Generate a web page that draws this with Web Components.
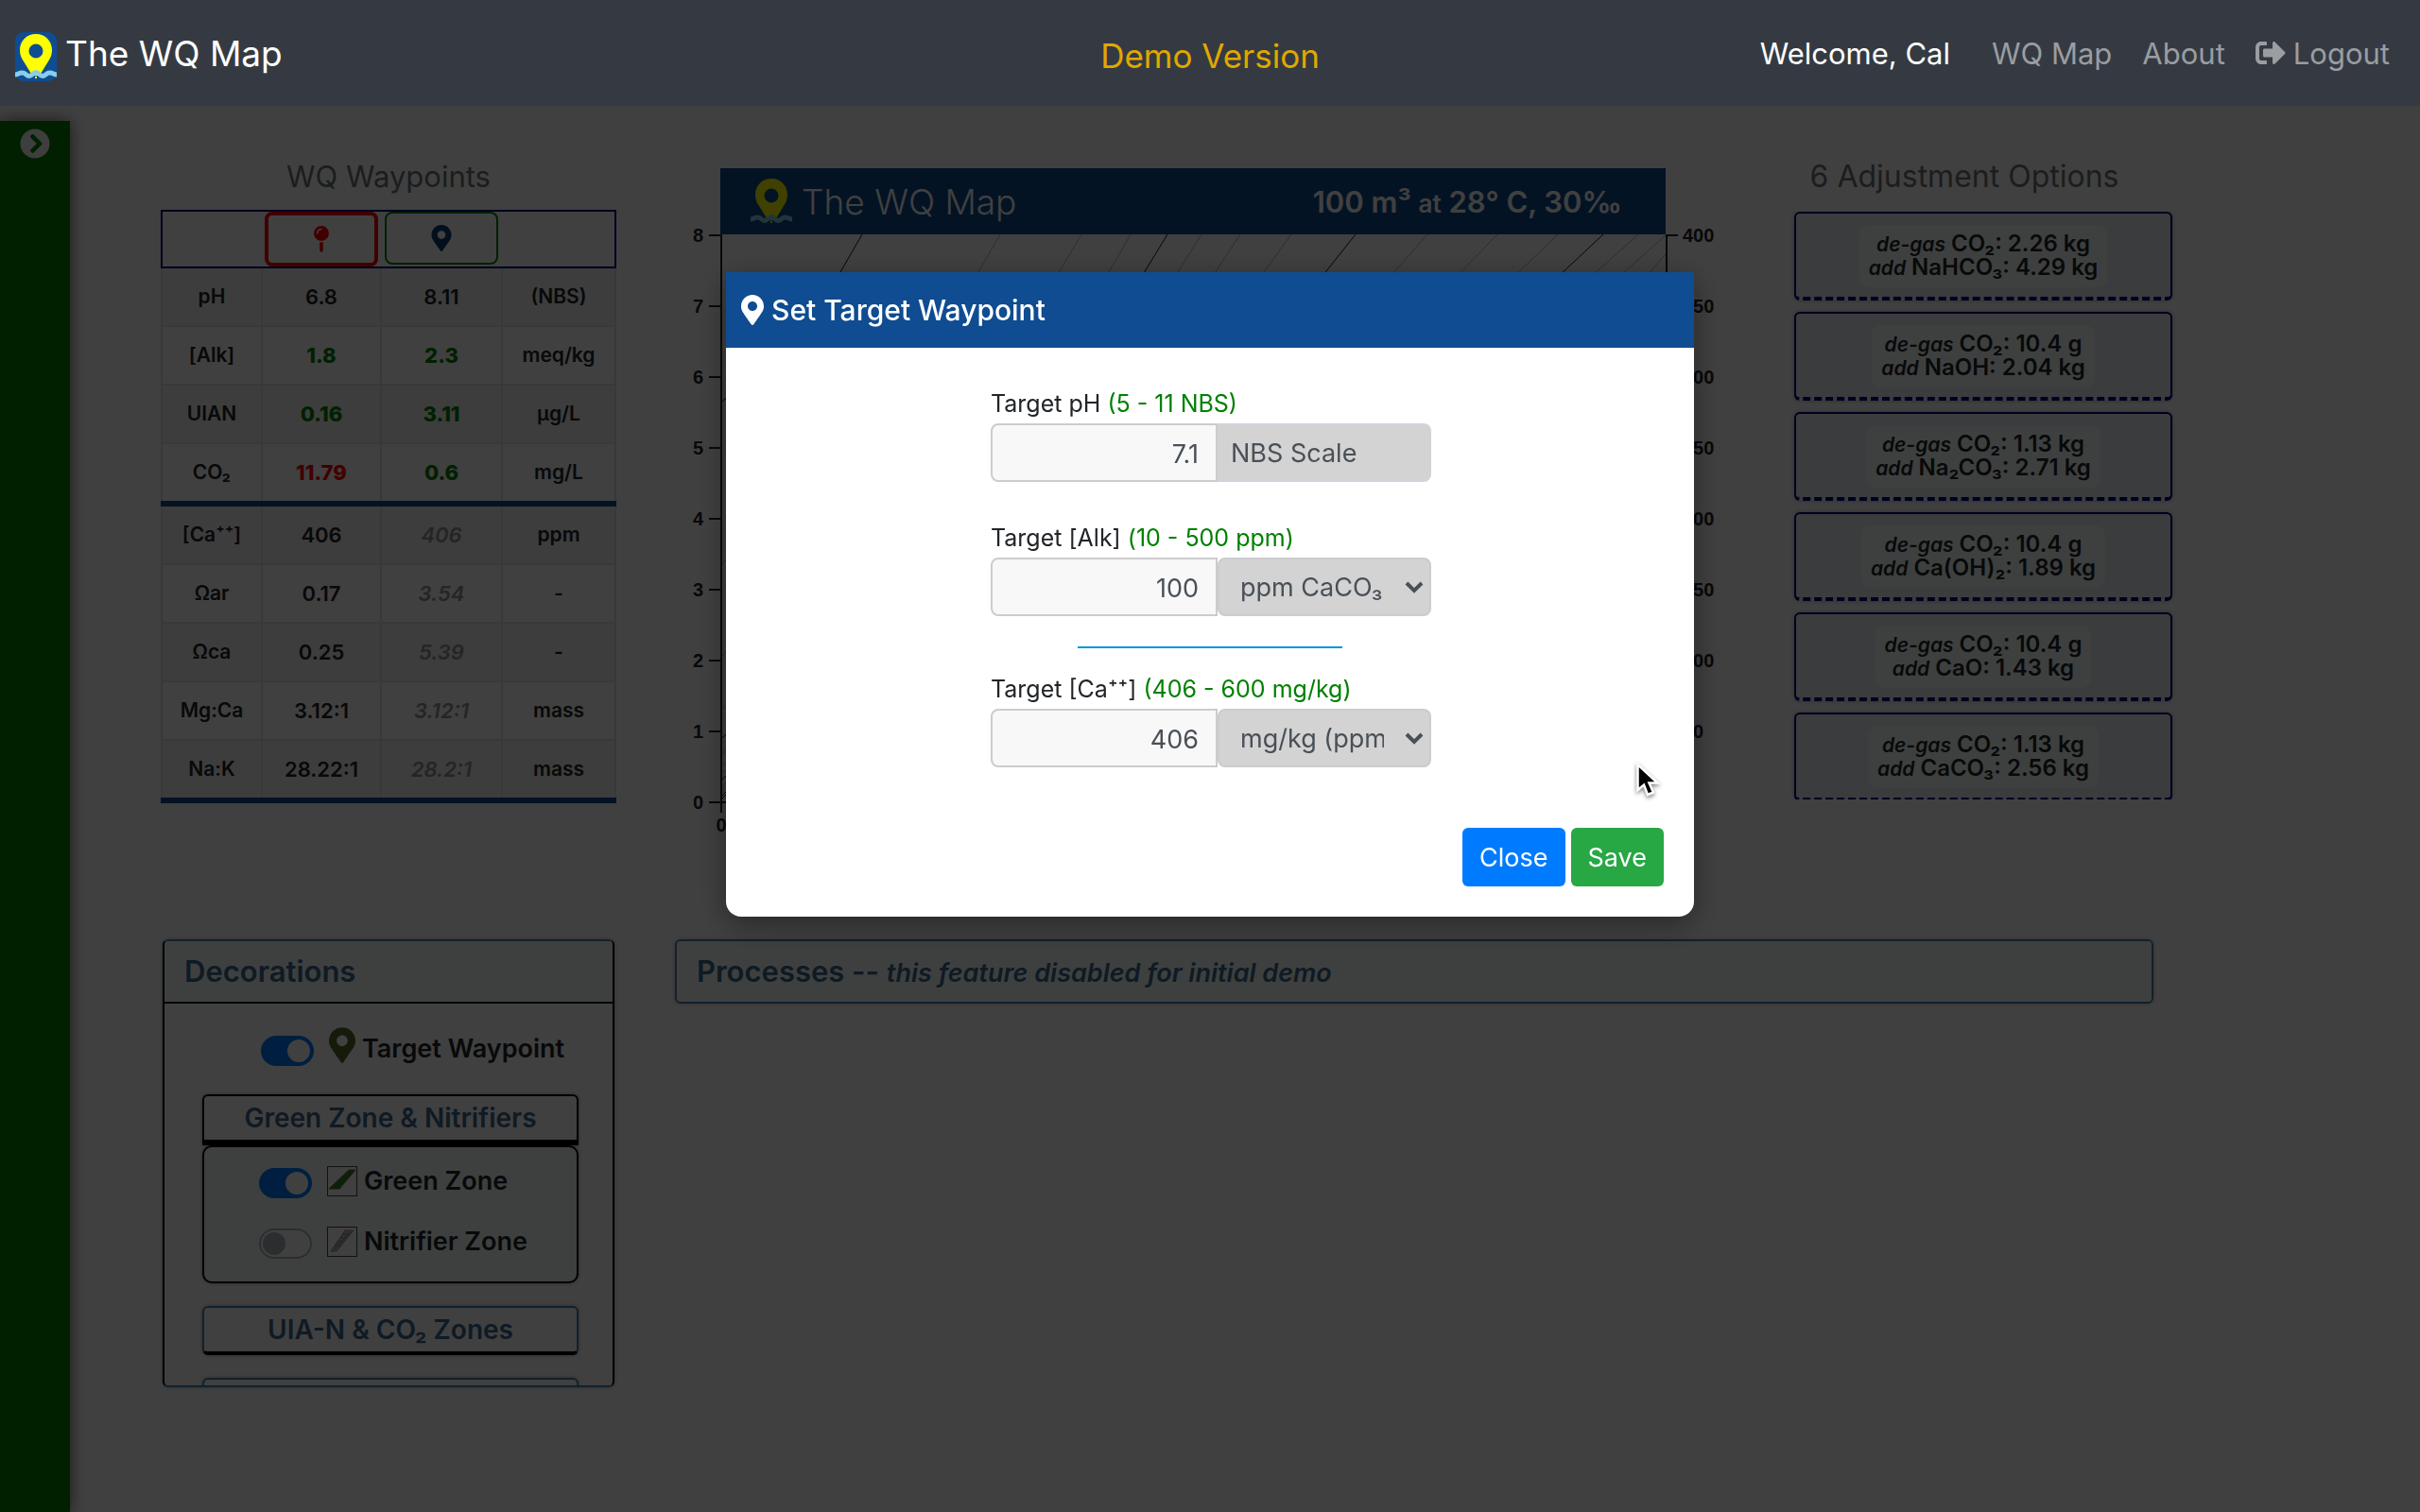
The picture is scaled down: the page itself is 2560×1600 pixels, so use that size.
<!DOCTYPE html>
<html lang="en">
<head>
<meta charset="utf-8">
<title>The WQ Map</title>
<style>
  html, body { height: 100%; }
  body {
    margin: 0; min-height: 100%; background: #fff; color: #212529; overflow: hidden;
    font-family: Inter, "Noto Sans", sans-serif; font-size: 28px;
    display: grid; grid-template: 112px 1fr / 74px 1fr;
  }
  wq-navbar { grid-column: 1 / -1; }
  main { padding: 54px 262px 0 96px; }
  .top { display: grid; grid-template-columns: 482px 1fr 400px; column-gap: 80px; height: 828px; align-items: start; }
  .bottom { display: grid; grid-template-columns: 478px 1fr; column-gap: 64px; align-items: start; margin: 0 20px 0 2px; }
</style>
</head>
<body>
<wq-navbar user="Cal"></wq-navbar>
<wq-drawer></wq-drawer>
<main>
  <div class="top">
    <wq-waypoints></wq-waypoints>
    <wq-chart></wq-chart>
    <wq-options>
      <wq-option gas="2.26 kg" amount="4.29 kg">NaHCO₃</wq-option>
      <wq-option gas="10.4 g" amount="2.04 kg">NaOH</wq-option>
      <wq-option gas="1.13 kg" amount="2.71 kg">Na₂CO₃</wq-option>
      <wq-option gas="10.4 g" amount="1.89 kg">Ca(OH)₂</wq-option>
      <wq-option gas="10.4 g" amount="1.43 kg">CaO</wq-option>
      <wq-option gas="1.13 kg" amount="2.56 kg">CaCO₃</wq-option>
    </wq-options>
  </div>
  <div class="bottom">
    <wq-panel open>
      <span slot="title">Decorations</span>
      <wq-decorations></wq-decorations>
    </wq-panel>
    <wq-panel>
      <span slot="title">Processes -- </span>
      <em slot="note">this feature disabled for initial demo</em>
    </wq-panel>
  </div>
</main>
<wq-modal>
  <span slot="title">Set Target Waypoint</span>
  <wq-field label="Target pH" range="(5 - 11 NBS)" value="7.1" unit="NBS Scale"></wq-field>
  <wq-field label="Target [Alk]" range="(10 - 500 ppm)" value="100" options="ppm CaCO₃|meq/kg|dKH"></wq-field>
  <wq-rule></wq-rule>
  <wq-field label="Target [Ca⁺⁺]" range="(406 - 600 mg/kg)" value="406" options="mg/kg (ppm)|mmol/kg"></wq-field>
</wq-modal>
<wq-pointer></wq-pointer>

<script>
const define = (name, css, html) => customElements.define(name, class extends HTMLElement {
  connectedCallback() {
    if (this.shadowRoot) return;
    const root = this.attachShadow({ mode: 'open' });
    root.innerHTML = `<style>*{box-sizing:border-box}${css}</style>${typeof html === 'function' ? html(this) : html}`;
  }
});

const SHAPES = {
  marker: ['0 0 384 512', 'M172.268 501.67C26.97 291.031 0 269.413 0 192 0 85.961 85.961 0 192 0s192 85.961 192 192c0 77.413-26.97 99.031-172.268 309.67-9.535 13.774-29.93 13.773-39.464 0zM192 272c44.183 0 80-35.817 80-80s-35.817-80-80-80-80 35.817-80 80 35.817 80 80 80z'],
  pin: ['0 0 288 512', 'M112 316.94v156.69l22.02 33.02c4.75 7.12 15.22 7.12 19.97 0L176 473.63V316.94c-10.39 1.92-21.06 3.06-32 3.06s-21.61-1.14-32-3.06zM144 0C64.47 0 0 64.47 0 144s64.47 144 144 144 144-64.47 144-144S223.53 0 144 0zm0 76c-37.5 0-68 30.5-68 68 0 6.62-5.38 12-12 12s-12-5.38-12-12c0-50.73 41.28-92 92-92 6.62 0 12 5.38 12 12s-5.38 12-12 12z'],
  logout: ['0 0 512 512', 'M497 273L329 441c-15 15-41 4.5-41-17v-96H152c-13.3 0-24-10.7-24-24v-96c0-13.3 10.7-24 24-24h136V88c0-21.4 25.9-32 41-17l168 168c9.3 9.4 9.3 24.6 0 34zM192 436v-40c0-6.6-5.4-12-12-12H96c-17.7 0-32-14.3-32-32V160c0-17.7 14.3-32 32-32h84c6.6 0 12-5.4 12-12V76c0-6.6-5.4-12-12-12H96c-53 0-96 43-96 96v192c0 53 43 96 96 96h84c6.6 0 12-5.4 12-12z'],
  chevron: ['0 0 512 512', 'M256 8c137 0 248 111 248 248S393 504 256 504 8 393 8 256 119 8 256 8zm113.9 231L234.4 103.5c-9.4-9.4-24.6-9.4-33.9 0l-17 17c-9.4 9.4-9.4 24.6 0 33.9L285.1 256 183.5 357.6c-9.4 9.4-9.4 24.6 0 33.9l17 17c9.4 9.4 24.6 9.4 33.9 0L369.9 273c9.4-9.4 9.4-24.6 0-34z']
};

define('wq-icon', `:host{display:inline-block;flex:none}svg{display:block;width:100%;height:100%;fill:currentColor}`,
  el => { const [box, d] = SHAPES[el.getAttribute('name')]; return `<svg viewBox="${box}" aria-hidden="true"><path d="${d}"/></svg>`; });

define('wq-logo', `:host{display:block;width:44px;height:52px;flex:none}svg{display:block}`, el => `
  <svg width="44" height="52" viewBox="0 0 44 52" aria-hidden="true">
    ${el.hasAttribute('plain') ? '' : '<rect width="44" height="52" rx="9" fill="#0f4c91"/>'}
    <path fill="#ff0" fill-rule="evenodd" d="M22 2C12 2 5 9.500 5 19c0 5 1.500 8 4 12l8 13c2 3 8 3 10 0l8-13c2.500-4 4-7 4-12C39 9.500 32 2 22 2zm0 10.500a7.500 7.500 0 1 1 0 15a7.500 7.500 0 1 1 0-15z"/>
    <path d="M0 45c3 0 4-2 7.500-2S12 46.500 15 46.500s4-4 7-4 4 4 7 4 4-3.500 7.500-3.500S41 45 44 45" fill="none" stroke="#87ceeb" stroke-width="5"/>
    <rect x="21" y="47" width="2" height="2" fill="#ff0"/>
  </svg>`);

define('wq-navbar', `
  :host{display:block;position:relative;z-index:20;background:#353a42}
  header{height:100%;display:grid;grid-template-columns:1fr auto 1fr;align-items:center}
  a{text-decoration:none;color:inherit}
  .brand{display:flex;align-items:center;gap:9px;color:#fff;font-size:37px;padding-left:16px}
  .brand wq-logo{margin-top:8px}
  .demo{color:#e0a800;font-size:35px;padding-top:6px}
  nav{display:flex;justify-content:flex-end;align-items:center;gap:32px;font-size:31px;color:#9a9da1;padding-right:32px}
  .user{color:#fff;margin-right:12px}
  .out{display:flex;align-items:center;gap:8px}
  wq-icon{width:32px;height:32px}`,
  el => `<header>
    <a class="brand" href="#"><wq-logo></wq-logo><span>The WQ Map</span></a>
    <span class="demo">Demo Version</span>
    <nav><span class="user">Welcome, ${el.getAttribute('user')}</span><a href="#">WQ Map</a><a href="#">About</a>
      <a class="out" href="#"><wq-icon name="logout"></wq-icon><span>Logout</span></a></nav>
  </header>`);

define('wq-drawer', `
  :host{display:block;margin-top:16px;background:#008000;box-shadow:0 0 16px rgba(0,0,0,.6)}
  button{display:block;margin:8px auto 0;padding:0;border:0;background:none;color:#f8f8f8}
  wq-icon{display:block;width:32px;height:32px}`,
  `<button aria-label="Open menu"><wq-icon name="chevron"></wq-icon></button>`);

const ROWS = [
  ['pH', '6.8', '8.11', '(NBS)'],
  ['[Alk]', '1.8', '2.3', 'meq/kg', 'ok', 'ok'],
  ['UIAN', '0.16', '3.11', 'µg/L', 'ok', 'ok'],
  ['CO₂', '11.79', '0.6', 'mg/L', 'bad', 'ok'],
  ['[Ca⁺⁺]', '406', '406', 'ppm', '', 'dim'],
  ['Ωar', '0.17', '3.54', '-', '', 'dim'],
  ['Ωca', '0.25', '5.39', '-', '', 'dim'],
  ['Mg:Ca', '3.12:1', '3.12:1', 'mass', '', 'dim'],
  ['Na:K', '28.22:1', '28.2:1', 'mass', '', 'dim']
];
define('wq-waypoints', `
  :host{display:block}
  h2{margin:0 0 14px;font-size:31px;line-height:42px;font-weight:400;color:#6c757d;text-align:center}
  table{width:480px;table-layout:fixed;border-collapse:collapse;font-size:21px;font-weight:600;text-align:center}
  th,td{padding:0;border:2px solid #dee2e6;line-height:60px;height:60px;font-weight:600}
  thead th{border:0;border-bottom:2px solid #000080;height:58px;line-height:0;vertical-align:top}
  thead tr{border:2px solid #000080}
  tbody tr:first-child > *{border-top-color:#000080}
  tbody tr:nth-child(odd){background:#f2f2f2}
  tbody tr:nth-child(4) > *,tbody tr:last-child > *{border-bottom:6px solid #0f4c91}
  td.v{font-size:22px}
  .ok{color:#008000;font-weight:800}.bad{color:#f00;font-weight:800}
  .dim{color:#909498;font-style:italic}
  button{width:120px;height:56px;border-radius:8px;border:2px solid #008000;background:none;padding:0;display:inline-flex;align-items:center;justify-content:center;color:#0c3c70}
  button.now{height:58px;border:4px solid #f00;color:#f00}
  wq-icon{width:22px;height:28px}`,
  `<h2>WQ Waypoints</h2><table><colgroup><col style="width:106px"><col style="width:126px"><col style="width:128px"><col style="width:120px"></colgroup>
  <thead><tr><th></th><th><button class="now" aria-label="Initial waypoint"><wq-icon name="pin"></wq-icon></button></th><th><button aria-label="Target waypoint"><wq-icon name="marker"></wq-icon></button></th><th></th></tr></thead>
  <tbody>${ROWS.map(([n, a, b, u, ca = '', cb = '']) => `<tr><th>${n}</th><td class="v ${ca}">${a}</td><td class="v ${cb}">${b}</td><td>${u}</td></tr>`).join('')}</tbody></table>`);

/* Isopleths of the plot: x at the top edge, x at 59px below it, and whether the line is a major one. */
const LINES = [[180,146,1],[326,292],[412,377],[464,430],[503,467,1],[539,502],[580,541],[634,591],[702,655,1],[778,726],[852,795],[916,855],[964,901,1],[1001,935],[1031,965]];
const LEFT = [[177,1],[349],[446],[502],[533,1],[550],[562],[570],[577,1],[584],[588],[591],[594,1],[597,1]];
define('wq-chart', `
  :host{display:block;padding-top:12px}
  .bar{margin:0 56px 0 30px;height:70px;background:#0f4c91;color:#fff;display:flex;align-items:center;padding:0 46px 0 32px;gap:10px}
  .name{font-size:37px;font-weight:300}
  .cond{margin-left:auto;font-size:31px;font-weight:600}
  .cond small{font-size:26px}
  svg.plot{display:block;width:100%;height:auto;overflow:visible}
  text{font:bold 20px "Liberation Sans",sans-serif;fill:#212529}
  .axis{stroke:#212529;stroke-width:2;fill:none}
  line{stroke:#b4b4b4;stroke-width:1}line.major{stroke:#111}`,
  () => {
    let s = '';
    for (const [a, b, m] of LINES) s += `<line class="${m ? 'major' : ''}" x1="${a}" y1="0" x2="${b}" y2="59"/>`;
    s += '<line x1="1030" y1="21" x2="997" y2="59"/>';
    for (const [y, m] of LEFT) s += `<line class="${m ? 'major' : ''}" x1="32" y1="${y}" x2="42" y2="${y - 10}"/>`;
    for (let i = 0; i <= 8; i++) {
      const y = 601 - i * 75;
      s += `<path class="axis" d="M18 ${y}H31M1031 ${y}h12"/><text x="12" y="${y + 7}" text-anchor="end">${i}</text><text x="1048" y="${y + 7}">${i * 50}</text>`;
    }
    return `<div class="bar"><wq-logo plain></wq-logo><span class="name">The WQ Map</span><span class="cond">100 m³ <small>at</small> 28° C, 30‰</span></div>
    <svg class="plot" viewBox="0 0 1086 640">${s}<path class="axis" d="M31 0V612M1031 0V601M31 601H1031"/><text x="31" y="632" text-anchor="middle">0</text></svg>`;
  });

define('wq-options', `
  :host{display:block}
  h2{margin:0 40px 16px 0;font-size:32px;line-height:42px;font-weight:400;color:#6c757d;text-align:center;white-space:nowrap}
  .list{display:flex;flex-direction:column;gap:12px;height:622px;overflow:hidden;margin:0 -4px;padding:0 4px}`,
  `<h2>6 Adjustment Options</h2><div class="list"><slot></slot></div>`);

define('wq-option', `
  :host{display:block;flex:none}
  button{display:flex;justify-content:center;align-items:center;width:100%;height:94px;padding:2px 0 0;font:600 24px/24px Inter,sans-serif;color:#212529;background:#ecf0f4;border:2px solid #000080;border-bottom:4px dashed #000080;border-radius:6px;box-shadow:0 0 4px rgba(0,0,0,.3)}
  .pill{background:#f5fffa;border-radius:10px;padding:8px 10px;text-align:center}
  em{font-size:21px}`,
  el => `<button><span class="pill"><em>de-gas</em> CO₂: ${el.getAttribute('gas')}<br><em>add</em> <slot></slot>: ${el.getAttribute('amount')}</span></button>`);

define('wq-panel', `
  :host{display:block;box-sizing:border-box;border:2px solid #4682b4;border-radius:6px;background:#fff;box-shadow:0 0 4px rgba(0,0,0,.3);overflow:hidden}
  :host([open]){height:474px;border-left-color:#000;border-right-color:#000}
  h3{margin:0;height:64px;line-height:64px;padding:0 21px;background:#f5fffa;color:#3f6890;font-size:31px;font-weight:600;white-space:pre}
  :host([open]) h3{height:66px;border-bottom:2px solid #000}
  ::slotted(em){font-size:27px}`,
  `<h3><slot name="title"></slot><slot name="note"></slot></h3><slot></slot>`);

define('wq-switch', `
  :host{display:flex;align-items:center;gap:16px;height:32px}
  input{appearance:none;margin:0;width:56px;height:32px;border-radius:16px;border:2px solid #adb5bd;background:#fff;padding:2px;flex:none}
  input::before{content:"";display:block;width:24px;height:24px;border-radius:50%;background:#adb5bd}
  input:checked{background:#007bff;border-color:#007bff}
  input:checked::before{background:#fff;margin-left:24px}
  label{display:flex;align-items:center;gap:7px;margin-bottom:5px;font-size:27px;font-weight:600;white-space:nowrap}`,
  el => `<input type="checkbox" id="s" ${el.hasAttribute('checked') ? 'checked' : ''}><label for="s"><slot name="icon"></slot><slot></slot></label>`);

define('wq-section', `
  :host{display:block}
  h4{margin:0}
  button{display:block;width:100%;height:52px;padding:0;font:600 28px/44px Inter,sans-serif;color:#3f6890;background:#fff;border:2px solid #4682b4;border-bottom:4px solid #000;border-radius:6px;box-shadow:0 0 4px rgba(0,0,0,.3)}
  :host([open]) button{height:54px;border-color:#000;border-bottom-width:6px;border-radius:6px 6px 0 0}
  .body{display:none}
  :host([open]) .body{display:flex;flex-direction:column;gap:32px;height:146px;padding:22px 58px 0;border:2px solid #000;border-radius:10px;background:#f5fffa;box-shadow:0 0 4px rgba(0,0,0,.3)}`,
  el => `<h4><button>${el.getAttribute('label')}</button></h4><div class="body"><slot></slot></div>`);

define('wq-decorations', `
  :host{display:flex;flex-direction:column;gap:24px;padding:0 36px 0 40px}
  .lead{margin:34px 0 6px 62px}
  .lead wq-icon{width:28px;height:38px;color:#556b2f;margin-bottom:8px}
  svg{display:block}`,
  `<wq-switch class="lead" checked><wq-icon slot="icon" name="marker"></wq-icon>Target Waypoint</wq-switch>
  <wq-section open label="Green Zone &amp; Nitrifiers">
    <wq-switch checked><svg slot="icon" width="32" height="32" viewBox="0 0 32 32"><rect x=".5" y=".5" width="31" height="31" fill="#fff" stroke="#444"/><path d="M2 24L23 4h7L13 24z" fill="#228b22" stroke="#a44"/></svg>Green Zone</wq-switch>
    <wq-switch><svg slot="icon" width="32" height="32" viewBox="0 0 32 32"><rect x=".5" y=".5" width="31" height="31" fill="#fff" stroke="#444"/><path d="M4 26L19 4h9L10 26z" fill="#bbb" stroke="#a88"/><path d="M8 20h6M11 16h6M14 12h7M17 8h7M8 24L24 6" stroke="#888"/></svg>Nitrifier Zone</wq-switch>
  </wq-section>
  <wq-section label="UIA-N &amp; CO₂ Zones"></wq-section>
  <wq-section label=""></wq-section>`);

define('wq-rule', `:host{display:block;margin:-8px 94px -16px 92px}hr{margin:0;border:0;height:2px;background:#0896da}`, `<hr>`);

define('wq-field', `
  :host{display:block}
  label{display:block;font-size:25px;line-height:38px;margin-bottom:2px;white-space:nowrap}
  label span{color:#008000}
  .group{display:flex;height:62px}
  input,select,.unit{font:400 27px/32px Inter,sans-serif;color:#495057;margin:0;border:2px solid #ccc;height:62px}
  input{width:240px;text-align:right;padding:2px 18px 0;background:#f8f8f8;border-radius:8px 0 0 8px;outline:0}
  .unit,.pick{flex:1;min-width:0}
  .unit{display:flex;align-items:center;padding:2px 14px 0;background:#d3d3d3;border-color:#ced4da;border-left:0;border-radius:0 8px 8px 0}
  .pick{display:grid;align-items:center}
  .pick > *{grid-area:1/1}
  select{appearance:none;width:100%;background:#d3d3d3;border-radius:8px;padding:2px 48px 0 22px}
  svg{justify-self:end;margin-right:8px;pointer-events:none}`,
  el => {
    const g = n => el.getAttribute(n), opts = g('options');
    return `<label for="v">${g('label')} <span>${g('range')}</span></label><div class="group"><input id="v" type="text" inputmode="decimal" value="${g('value')}">${
      opts ? `<div class="pick"><select aria-label="${g('label')} unit">${opts.split('|').map(o => `<option>${o}</option>`).join('')}</select><svg width="20" height="14" viewBox="0 0 20 14" fill="none" stroke="#495057" stroke-width="4"><path d="M2 3l8 8 8-8"/></svg></div>`
           : `<div class="unit">${g('unit')}</div>`}</div>`;
  });

define('wq-modal', `
  :host{display:flex;position:fixed;inset:112px 0 0;z-index:10;background:rgba(0,0,0,.75);justify-content:center;align-items:flex-start;padding-top:176px}
  section{width:1024px;background:#fff;border-radius:0 0 16px 16px;box-shadow:0 8px 32px rgba(0,0,0,.4)}
  h1{margin:0;height:80px;background:#0f4c91;color:#fff;display:flex;align-items:center;gap:8px;padding:0 16px;font-size:30px;font-weight:500}
  h1 wq-icon{width:24px;height:32px}
  .body{width:468px;margin:0 auto;padding:40px 0 64px 2px;display:flex;flex-direction:column;gap:40px}
  footer{display:flex;justify-content:flex-end;gap:6px;padding:0 32px 32px}
  button{height:62px;padding:2px 18px 0;border:0;border-radius:6px;color:#fff;background:#007bff;font:400 27px/32px Inter,sans-serif}
  button.save{background:#28a745}`,
  `<section role="dialog" aria-labelledby="t"><h1 id="t"><wq-icon name="marker"></wq-icon><slot name="title"></slot></h1>
  <div class="body"><slot></slot></div>
  <footer><button type="button">Close</button><button type="button" class="save">Save</button></footer></section>`);

define('wq-pointer', `:host{position:fixed;left:1728px;top:804px;z-index:30;pointer-events:none}svg{display:block;filter:drop-shadow(0 2px 2px rgba(0,0,0,.5))}`,
  `<svg width="30" height="44" viewBox="0 0 30 44"><path d="M4.500 5v27l6.500-5.500 4 10.500 6-2.500-4.500-10h9z" fill="#000" stroke="#fff" stroke-width="2.500"/></svg>`);
</script>
</body>
</html>
